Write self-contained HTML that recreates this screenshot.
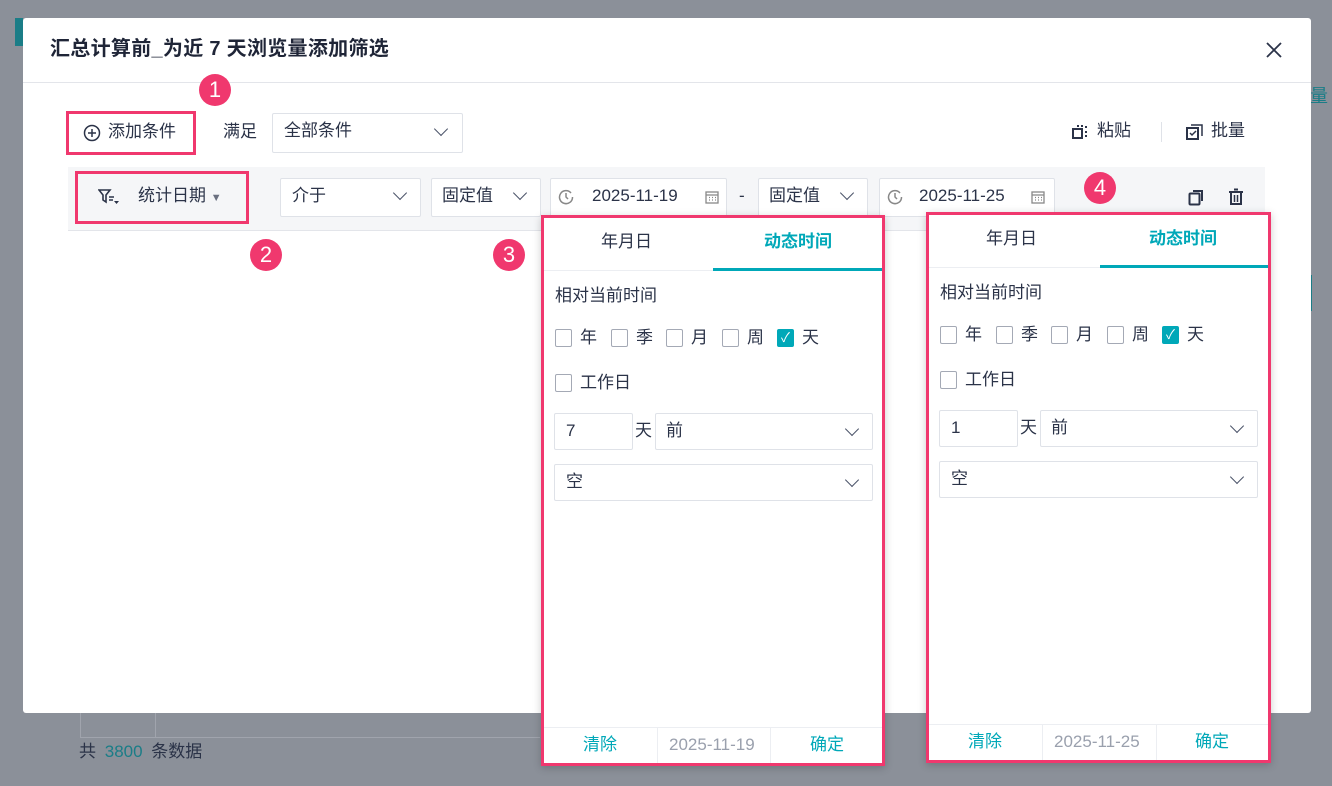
<!DOCTYPE html>
<html><head><meta charset="utf-8"><style>
*{box-sizing:border-box;margin:0;padding:0}
body{width:1332px;height:786px;overflow:hidden;background:#8b9099;font-family:"Liberation Sans","Noto Sans CJK SC",sans-serif;color:#2b3348;position:relative;font-size:17px;line-height:20px}
.a{position:absolute;white-space:nowrap}
.modal{left:23px;top:18px;width:1288px;height:695px;background:#fff;border-radius:3px}
.box{border:1px solid #dfe2e8;background:#fff;border-radius:2px}
.badge{width:32px;height:32px;border-radius:50%;background:#f0386e;color:#fff;font-size:22px;text-align:center;line-height:32px}
.chev{width:10px;height:10px;border-right:1.6px solid #4a5268;border-bottom:1.6px solid #4a5268;transform:rotate(45deg)}
.pop{width:344px;height:551px;border:3px solid #f0386e;background:#fff;box-shadow:0 2px 8px rgba(0,0,0,.2)}
.cb{width:17px;height:18px;border:1px solid #a4a9b5;border-radius:2px;background:#fff}
.cbon{background:#00a8b8;border-color:#00a8b8}
.teal{color:#00a8b8}
</style></head><body>
<div class="a" style="left:15px;top:18px;width:8px;height:28px;background:#1b7d87"></div>
<div class="a" style="left:1310px;top:86px;color:#1b7d87;font-size:18px">量</div>
<div class="a" style="left:1308px;top:275px;width:4px;height:36px;background:#1b7d87"></div>
<div class="a" style="left:80px;top:713px;width:1px;height:24px;background:#a0a4ad"></div>
<div class="a" style="left:155px;top:713px;width:1px;height:24px;background:#a0a4ad"></div>
<div class="a" style="left:80px;top:737px;width:460px;height:1px;background:#a0a4ad"></div>
<div class="a" style="left:79px;top:742px;font-size:17px;color:#2b3348">共 <span style="color:#1b7d87;margin:0 4px">3800</span> 条数据</div>
<div class="a" style="left:1273px;top:650px;width:11px;height:36px;background:#00a8b8;border-radius:0 3px 3px 0"></div>

<div class="a modal">
 <div class="a" style="left:27px;top:21px;font-size:20px;font-weight:bold;color:#1f2537;letter-spacing:0.3px">汇总计算前_为近 7 天浏览量添加筛选</div>
 <svg class="a" style="left:1243px;top:24px" width="16" height="16" viewBox="0 0 16 16"><path d="M1 1L15 15M15 1L1 15" stroke="#2b3348" stroke-width="1.8"/></svg>
 <div class="a" style="left:0;top:64px;width:1288px;height:1px;background:#e3e5ea"></div>
 <div class="a box" style="left:43px;top:95px;width:130px;height:40px"></div>
 <svg class="a" style="left:60px;top:106px" width="18" height="18" viewBox="0 0 18 18"><circle cx="9" cy="9" r="7.5" fill="none" stroke="#2b3348" stroke-width="1.5"/><path d="M9 5v8M5 9h8" stroke="#2b3348" stroke-width="1.5"/></svg>
 <div class="a" style="left:85px;top:104px">添加条件</div>
 <div class="a" style="left:200px;top:104px">满足</div>
 <div class="a box" style="left:249px;top:95px;width:191px;height:40px"></div>
 <div class="a" style="left:261px;top:103px">全部条件</div>
 <div class="a chev" style="left:413px;top:106px"></div>
 <svg class="a" style="left:1049px;top:106px" width="16" height="16" viewBox="0 0 16 16"><rect x="1" y="5" width="9" height="9" fill="none" stroke="#2b3348" stroke-width="2"/><path d="M5 2h2M9 2h2M14 2v2M14 7v2M14 11v2" stroke="#2b3348" stroke-width="2"/></svg>
 <div class="a" style="left:1074px;top:103px">粘贴</div>
 <div class="a" style="left:1138px;top:104px;width:1px;height:20px;background:#dfe2e8"></div>
 <svg class="a" style="left:1163px;top:106px" width="17" height="17" viewBox="0 0 17 17"><rect x="1" y="4" width="11" height="11" fill="none" stroke="#2b3348" stroke-width="2"/><path d="M5 1h11v11" fill="none" stroke="#2b3348" stroke-width="1.5"/><path d="M4 9l2 2 4-4" fill="none" stroke="#2b3348" stroke-width="1.5"/></svg>
 <div class="a" style="left:1188px;top:103px">批量</div>
 <div class="a" style="left:45px;top:149px;width:1197px;height:64px;background:#f5f6f8;border-bottom:1px solid #e3e5ea"></div>
 <svg class="a" style="left:75px;top:171px" width="22" height="16" viewBox="0 0 22 16"><path d="M1 1h11L8 6v7L5 11V6z" fill="none" stroke="#2b3348" stroke-width="1.6"/><path d="M11 8h5M11 11h4" stroke="#2b3348" stroke-width="1.5"/><path d="M16 12h5l-2.5 3z" fill="#2b3348"/></svg>
 <div class="a" style="left:115px;top:168px">统计日期 <span style="font-size:11px;color:#6a7080">▼</span></div>
 <div class="a box" style="left:257px;top:160px;width:141px;height:39px"></div>
 <div class="a" style="left:269px;top:168px">介于</div>
 <div class="a chev" style="left:372px;top:170px"></div>
 <div class="a box" style="left:408px;top:160px;width:110px;height:39px"></div>
 <div class="a" style="left:419px;top:168px">固定值</div>
 <div class="a chev" style="left:492px;top:170px"></div>
 <div class="a box" style="left:527px;top:160px;width:177px;height:39px"></div>
 <svg class="a" style="left:535px;top:171px" width="16" height="16" viewBox="0 0 16 16"><path d="M13 4A6.5 6.5 0 1 0 14.5 8" fill="none" stroke="#888" stroke-width="1.5"/><path d="M8 4v4l2 2" fill="none" stroke="#888" stroke-width="1.5"/></svg>
 <div class="a" style="left:569px;top:168px">2025-11-19</div>
 <svg class="a" style="left:682px;top:172px" width="14" height="14" viewBox="0 0 14 14"><rect x="1" y="2" width="12" height="11" fill="none" stroke="#888" stroke-width="1.3"/><path d="M1 5h12M4 7.5h1M7 7.5h1M10 7.5h1M4 10h1M7 10h1M10 10h1" stroke="#888" stroke-width="1.3"/></svg>
 <div class="a" style="left:716px;top:168px">-</div>
 <div class="a box" style="left:735px;top:160px;width:110px;height:39px"></div>
 <div class="a" style="left:746px;top:168px">固定值</div>
 <div class="a chev" style="left:819px;top:170px"></div>
 <div class="a box" style="left:856px;top:160px;width:176px;height:39px"></div>
 <svg class="a" style="left:864px;top:171px" width="16" height="16" viewBox="0 0 16 16"><path d="M13 4A6.5 6.5 0 1 0 14.5 8" fill="none" stroke="#888" stroke-width="1.5"/><path d="M8 4v4l2 2" fill="none" stroke="#888" stroke-width="1.5"/></svg>
 <div class="a" style="left:896px;top:168px">2025-11-25</div>
 <svg class="a" style="left:1008px;top:172px" width="14" height="14" viewBox="0 0 14 14"><rect x="1" y="2" width="12" height="11" fill="none" stroke="#888" stroke-width="1.3"/><path d="M1 5h12M4 7.5h1M7 7.5h1M10 7.5h1M4 10h1M7 10h1M10 10h1" stroke="#888" stroke-width="1.3"/></svg>
 <svg class="a" style="left:1165px;top:171px" width="16" height="17" viewBox="0 0 16 17"><rect x="1.5" y="4.5" width="10" height="11" rx="1" fill="none" stroke="#2b3348" stroke-width="2"/><path d="M5 2h9v10" fill="none" stroke="#2b3348" stroke-width="2"/></svg>
 <svg class="a" style="left:1205px;top:170px" width="16" height="18" viewBox="0 0 16 18"><path d="M1 4h14M6 1.5h4" stroke="#2b3348" stroke-width="2"/><path d="M3 5v11h10V5" fill="none" stroke="#2b3348" stroke-width="2"/><path d="M6.5 7v7M9.5 7v7" stroke="#2b3348" stroke-width="1.5"/></svg>
 <div class="a" style="left:43px;top:93px;width:130px;height:44px;border:3px solid #f0386e"></div>
 <div class="a" style="left:52px;top:153px;width:174px;height:53px;border:3px solid #f0386e"></div>
</div>

<div class="a badge" style="left:199px;top:74px">1</div>
<div class="a badge" style="left:250px;top:239px">2</div>
<div class="a badge" style="left:493px;top:239px">3</div>
<div class="a badge" style="left:1084px;top:172px">4</div>

<!-- popup 1 -->
<div class="a pop" style="left:541px;top:215px">
 <div class="a" style="left:0;top:0;width:338px;height:53px;border-bottom:1px solid #eceef2"></div>
 <div class="a" style="left:57px;top:14px">年月日</div>
 <div class="a teal" style="left:220px;top:14px;font-weight:bold">动态时间</div>
 <div class="a" style="left:169px;top:50px;width:169px;height:3px;background:#00a8b8"></div>
 <div class="a" style="left:11px;top:68px">相对当前时间</div>
 <div class="a cb" style="left:11px;top:111px"></div><div class="a" style="left:36px;top:110px">年</div>
 <div class="a cb" style="left:67px;top:111px"></div><div class="a" style="left:92px;top:110px">季</div>
 <div class="a cb" style="left:122px;top:111px"></div><div class="a" style="left:147px;top:110px">月</div>
 <div class="a cb" style="left:178px;top:111px"></div><div class="a" style="left:203px;top:110px">周</div>
 <div class="a cb cbon" style="left:233px;top:111px;color:#fff;font-size:13px;line-height:16px;text-align:center">✓</div><div class="a" style="left:258px;top:110px">天</div>
 <div class="a cb" style="left:11px;top:156px"></div><div class="a" style="left:36px;top:155px">工作日</div>
 <div class="a box" style="left:10px;top:195px;width:79px;height:37px"></div>
 <div class="a" style="left:22px;top:203px">7</div>
 <div class="a" style="left:91px;top:203px">天</div>
 <div class="a box" style="left:111px;top:195px;width:218px;height:37px"></div>
 <div class="a" style="left:122px;top:203px">前</div>
 <div class="a chev" style="left:303px;top:206px"></div>
 <div class="a box" style="left:10px;top:246px;width:319px;height:37px"></div>
 <div class="a" style="left:22px;top:254px">空</div>
 <div class="a chev" style="left:303px;top:257px"></div>
 <div class="a" style="left:0;top:509px;width:338px;height:1px;background:#eceef2"></div>
 <div class="a" style="left:113px;top:509px;width:1px;height:36px;background:#eceef2"></div>
 <div class="a" style="left:226px;top:509px;width:1px;height:36px;background:#eceef2"></div>
 <div class="a teal" style="left:39px;top:517px">清除</div>
 <div class="a" style="left:125px;top:517px;color:#9aa0ad">2025-11-19</div>
 <div class="a teal" style="left:266px;top:517px">确定</div>
</div>

<!-- popup 2 -->
<div class="a pop" style="left:926px;top:212px;width:345px">
 <div class="a" style="left:0;top:0;width:339px;height:53px;border-bottom:1px solid #eceef2"></div>
 <div class="a" style="left:57px;top:14px">年月日</div>
 <div class="a teal" style="left:220px;top:14px;font-weight:bold">动态时间</div>
 <div class="a" style="left:171px;top:50px;width:168px;height:3px;background:#00a8b8"></div>
 <div class="a" style="left:11px;top:68px">相对当前时间</div>
 <div class="a cb" style="left:11px;top:111px"></div><div class="a" style="left:36px;top:110px">年</div>
 <div class="a cb" style="left:67px;top:111px"></div><div class="a" style="left:92px;top:110px">季</div>
 <div class="a cb" style="left:122px;top:111px"></div><div class="a" style="left:147px;top:110px">月</div>
 <div class="a cb" style="left:178px;top:111px"></div><div class="a" style="left:203px;top:110px">周</div>
 <div class="a cb cbon" style="left:233px;top:111px;color:#fff;font-size:13px;line-height:16px;text-align:center">✓</div><div class="a" style="left:258px;top:110px">天</div>
 <div class="a cb" style="left:11px;top:156px"></div><div class="a" style="left:36px;top:155px">工作日</div>
 <div class="a box" style="left:10px;top:195px;width:79px;height:37px"></div>
 <div class="a" style="left:22px;top:203px">1</div>
 <div class="a" style="left:91px;top:203px">天</div>
 <div class="a box" style="left:111px;top:195px;width:218px;height:37px"></div>
 <div class="a" style="left:122px;top:203px">前</div>
 <div class="a chev" style="left:303px;top:206px"></div>
 <div class="a box" style="left:10px;top:246px;width:319px;height:37px"></div>
 <div class="a" style="left:22px;top:254px">空</div>
 <div class="a chev" style="left:303px;top:257px"></div>
 <div class="a" style="left:0;top:509px;width:339px;height:1px;background:#eceef2"></div>
 <div class="a" style="left:113px;top:509px;width:1px;height:36px;background:#eceef2"></div>
 <div class="a" style="left:227px;top:509px;width:1px;height:36px;background:#eceef2"></div>
 <div class="a teal" style="left:39px;top:517px">清除</div>
 <div class="a" style="left:125px;top:517px;color:#9aa0ad">2025-11-25</div>
 <div class="a teal" style="left:266px;top:517px">确定</div>
</div>
</body></html>
